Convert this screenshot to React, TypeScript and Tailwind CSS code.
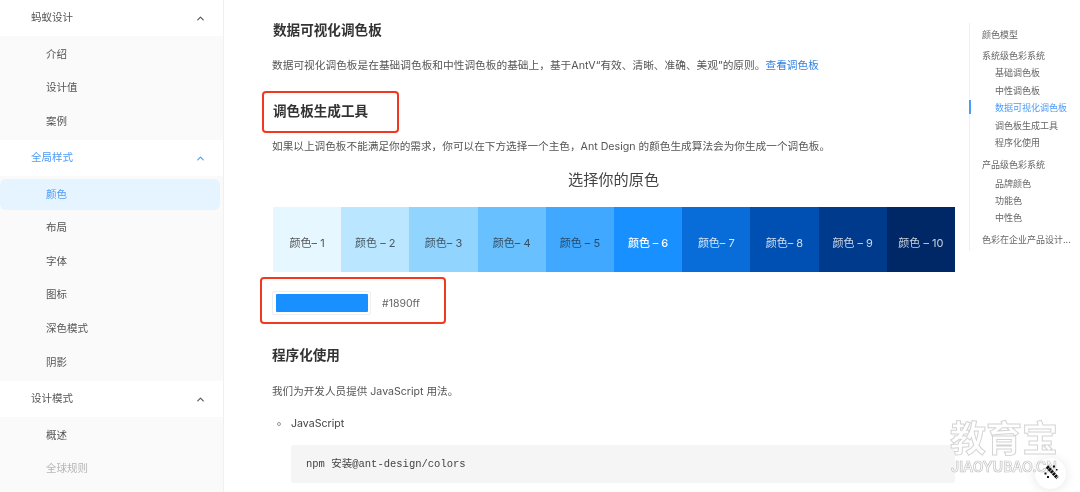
import { ChevronUp } from 'lucide-react';

const cjk = "font-['Inter','Noto_Sans_CJK_SC',sans-serif]";

function MenuHeader({ label, active }: { label: string; active?: boolean }) {
  return (
    <div className={`flex h-9 items-center justify-between pl-[31px] pr-[17px] text-[10.5px] ${active ? 'text-[#4d9bf8]' : 'text-[#555]'}`}>
      <span>{label}</span>
      <ChevronUp size={11} strokeWidth={2.5} />
    </div>
  );
}

function MenuItem({ label, selected, muted }: { label: string; selected?: boolean; muted?: boolean }) {
  const color = selected ? 'bg-[#e6f4ff] text-[#4d9bf8]' : muted ? 'text-[#b5b5b5]' : 'text-[#555]';
  return (
    <div className={`mr-[3px] flex h-[31px] items-center rounded-r-md rounded-l-md pl-[46px] text-[10.5px] ${color}`}>
      {label}
    </div>
  );
}

function Sidebar() {
  return (
    <aside className="h-[492px] w-[224px] shrink-0 overflow-hidden border-r border-[#f0f0f0] bg-white">
      <MenuHeader label="蚂蚁设计" />
      <div className="flex h-[104px] flex-col gap-[2.6px] bg-[#fafafa] pt-[3px]">
        <MenuItem label="介绍" />
        <MenuItem label="设计值" />
        <MenuItem label="案例" />
      </div>
      <MenuHeader label="全局样式" active />
      <div className="flex h-[205px] flex-col gap-[2.6px] bg-[#fafafa] pt-[3px]">
        <MenuItem label="颜色" selected />
        <MenuItem label="布局" />
        <MenuItem label="字体" />
        <MenuItem label="图标" />
        <MenuItem label="深色模式" />
        <MenuItem label="阴影" />
      </div>
      <MenuHeader label="设计模式" />
      <div className="flex h-[80px] flex-col gap-[2px] bg-[#fafafa] pt-[3px]">
        <MenuItem label="概述" />
        <MenuItem label="全球规则" muted />
      </div>
    </aside>
  );
}

const swatches = [
  { bg: 'bg-[#e6f7ff]', text: 'text-[#555]', label: '颜色– 1' },
  { bg: 'bg-[#bae7ff]', text: 'text-[#4a5a66]', label: '颜色 – 2' },
  { bg: 'bg-[#91d5ff]', text: 'text-[#3f5566]', label: '颜色– 3' },
  { bg: 'bg-[#69c0ff]', text: 'text-[#334f66]', label: '颜色– 4' },
  { bg: 'bg-[#40a9ff]', text: 'text-[#274a6b]', label: '颜色 – 5' },
  { bg: 'bg-[#1890ff]', text: 'text-white font-medium', label: '颜色 – 6' },
  { bg: 'bg-[#096dd9]', text: 'text-[#d5e5f7]', label: '颜色– 7' },
  { bg: 'bg-[#0050b3]', text: 'text-[#d0dff0]', label: '颜色– 8' },
  { bg: 'bg-[#003a8c]', text: 'text-[#ccd8e8]', label: '颜色 – 9' },
  { bg: 'bg-[#002766]', text: 'text-[#c8d2e0]', label: '颜色 – 10' },
];

function Palette() {
  return (
    <div className="ml-px mt-[17px] grid h-[65px] w-[682px] grid-cols-10">
      {swatches.map((s) => (
        <div key={s.label} className={`flex items-center justify-center pt-[7px] text-[11px] ${s.bg} ${s.text}`}>
          {s.label}
        </div>
      ))}
    </div>
  );
}

const toc = [
  { label: '颜色模型', y: 'mt-0' },
  { label: '系统级色彩系统', y: 'mt-[4px]' },
  { label: '基础调色板', y: 'mt-0', sub: true },
  { label: '中性调色板', y: 'mt-[0.5px]', sub: true },
  { label: '数据可视化调色板', y: 'mt-0', sub: true, active: true },
  { label: '调色板生成工具', y: 'mt-[0.5px]', sub: true },
  { label: '程序化使用', y: 'mt-0', sub: true },
  { label: '产品级色彩系统', y: 'mt-[4.5px]' },
  { label: '品牌颜色', y: 'mt-[1.5px]', sub: true },
  { label: '功能色', y: 'mt-0', sub: true },
  { label: '中性色', y: 'mt-0', sub: true },
  { label: '色彩在企业产品设计...', y: 'mt-[4.5px]' },
];

function Toc() {
  return (
    <nav className="relative ml-[14px] mt-[23px] h-[228px] w-[111px] border-l border-[#f0f0f0] pl-[12px] pt-[2.5px]">
      {toc.map((t) => (
        <div
          key={t.label}
          className={`h-[17.3px] whitespace-nowrap text-[9px] leading-[17.3px] ${t.y} ${t.sub ? 'pl-[13px]' : ''} ${t.active ? 'text-[#4d9bf8]' : 'text-[#666]'}`}
        >
          {t.label}
        </div>
      ))}
      <div className="absolute -left-px top-[77px] h-[14px] w-[2px] bg-[#4d9bf8]" />
    </nav>
  );
}

function WandIcon() {
  return (
    <svg width="18" height="18" viewBox="0 0 18 18" className="absolute left-[1042px] top-[463px] text-[#111]">
      <path d="M5 3.5 L15.5 15" stroke="currentColor" strokeWidth="3.4" strokeDasharray="2.4 0.6" />
      <rect x="11" y="2.5" width="2" height="2" fill="currentColor" />
      <rect x="14" y="6" width="1.5" height="1.5" fill="currentColor" />
      <rect x="2.5" y="9.5" width="2" height="2" fill="currentColor" />
      <rect x="5" y="13" width="2" height="2" fill="currentColor" />
    </svg>
  );
}

export default function App() {
  return (
    <div className={`relative flex h-[492px] w-[1080px] overflow-hidden bg-white blur-[0.35px] ${cjk}`}>
      <Sidebar />
      <main className="w-[731px] shrink-0 pl-[48px] pt-[20px] text-[#555]">
        <h3 className="h-5 pl-px text-[13.6px] font-semibold leading-5 text-[#333]">数据可视化调色板</h3>
        <p className="mt-[17px] h-4 text-[10.7px] leading-[18px]">
          数据可视化调色板是在基础调色板和中性调色板的基础上，基于AntV“有效、清晰、准确、美观”的原则。
          <span className="text-[#2f7fe0]">查看调色板</span>
        </p>
        <h3 className="mt-[28px] h-5 pl-px text-[13.6px] font-semibold leading-5 text-[#333]">调色板生成工具</h3>
        <p className="mt-[17px] h-4 text-[10.65px] leading-[18px]">
          如果以上调色板不能满足你的需求，你可以在下方选择一个主色，Ant Design 的颜色生成算法会为你生成一个调色板。
        </p>
        <div className="mt-[16px] h-5 text-center text-[15.2px] leading-5 text-[#444]">选择你的原色</div>
        <Palette />
        <div className="mt-[19px] flex h-6 items-center">
          <div className="flex h-6 w-[99px] items-center justify-center rounded-[2px] border border-[#eeeeee]">
            <div className="h-[18px] w-[92px] rounded-[1px] bg-[#1890ff]" />
          </div>
          <span className="ml-[11px] pt-[2px] text-[10.5px] text-[#666]">#1890ff</span>
        </div>
        <h3 className="mt-[30px] h-5 text-[13.6px] font-semibold leading-5 text-[#333]">程序化使用</h3>
        <p className="mt-[18px] h-4 text-[10.6px] leading-[18px]">我们为开发人员提供 JavaScript 用法。</p>
        <div className="mt-[16px] flex h-4 items-center pt-px text-[10.6px] leading-4 text-[#444]">
          <span className="ml-[5px] mr-[10px] h-[4px] w-[4px] rounded-full border border-[#999]" />
          JavaScript
        </div>
        <div className="ml-[19px] mt-[14px] flex h-[38px] w-[664px] items-center rounded-[3px] bg-[#f5f5f5] pl-[15px] pt-[2px] font-['Liberation_Mono','Noto_Sans_CJK_SC',monospace] text-[10.5px] text-[#444]">
          npm 安装@ant-design/colors
        </div>
      </main>
      <Toc />

      {/* red annotation boxes */}
      <div className="absolute left-[262px] top-[91px] h-[42px] w-[137px] rounded-[4px] border-2 border-[#f0391f]" />
      <div className="absolute left-[260px] top-[277px] h-[47px] w-[186px] rounded-[4px] border-2 border-[#f0391f]" />

      {/* floating button */}
      <div className="absolute left-[1035px] top-[458px] h-[31px] w-[31px] rounded-full bg-white shadow-[0_1px_12px_rgba(0,0,0,0.1)]" />

      {/* watermark */}
      <div className="absolute left-[949px] top-[421px] w-[110px] text-center text-[36px] font-bold leading-[36px] text-white [-webkit-text-stroke:1px_#d4d4d4]">
        教育宝
      </div>
      <div className="absolute left-[949px] top-[460px] w-[110px] text-center text-[14px] font-semibold leading-[14px] text-white [-webkit-text-stroke:0.7px_#c4c4c4]">
        JIAOYUBAO.CN
      </div>

      <WandIcon />
    </div>
  );
}
